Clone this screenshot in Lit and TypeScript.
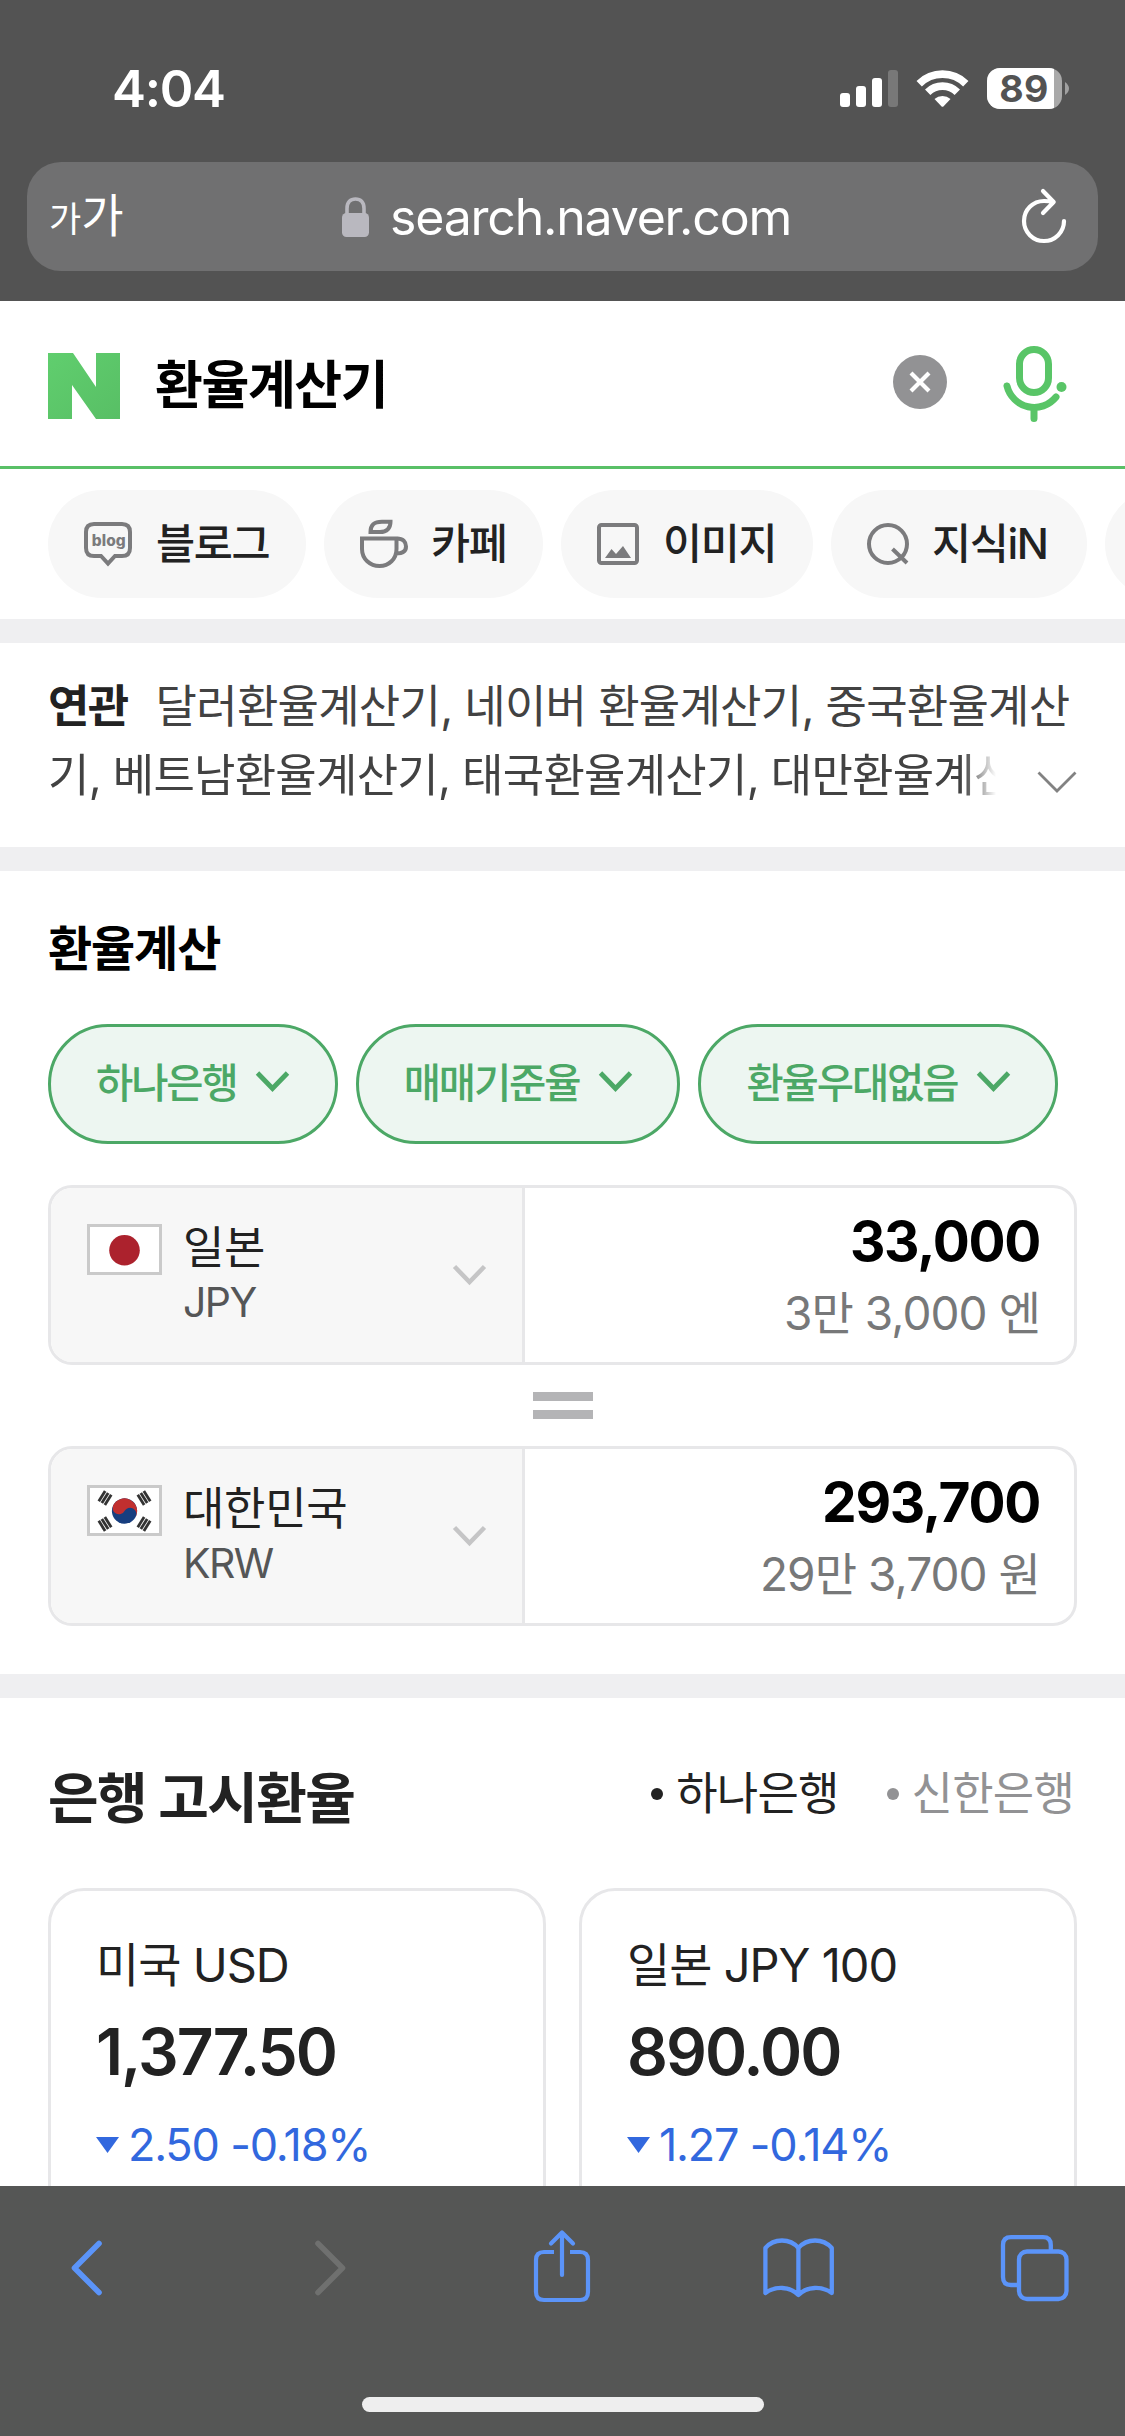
import { LitElement, html, css, svg } from "lit";
import { customElement, property } from "lit/decorators.js";

const FONT = css`Inter, "Noto Sans CJK KR", sans-serif`;

const shared = css`
  :host { box-sizing: border-box; }
  * { box-sizing: border-box; margin: 0; }
  svg { display: block; flex: none; overflow: visible; }
`;

/* ---------- Browser chrome: status bar and address bar ---------- */

@customElement("phone-header")
class PhoneHeader extends LitElement {
  static styles = [shared, css`
    :host { display: flex; flex-direction: column; height: 301px; flex: none; background: #535353; color: #fff; font-family: ${FONT}; }
    .status { display: flex; align-items: center; height: 162px; padding: 15px 56px 0 112px; }
    .time { flex: 1; font-size: 51px; line-height: 60px; font-weight: 600; letter-spacing: -1.3px; }
    .indicators { display: flex; align-items: center; gap: 19px; }
    .address { display: flex; align-items: center; height: 109px; margin: 0 27px; padding: 0 31px 0 22px; border-radius: 34px; background: #707071; }
    .size { display: flex; align-items: baseline; width: 293px; font-weight: 400; line-height: 60px; }
    .small { font-size: 35px; }
    .big { font-size: 46px; letter-spacing: -1px; }
    .host { flex: 1; display: flex; align-items: center; gap: 21px; }
    .url { font-size: 50px; line-height: 60px; letter-spacing: -1.2px; }
  `];
  render() {
    return html`
      <div class="status">
        <div class="time">4:04</div>
        <div class="indicators">
          <svg width="58" height="37" viewBox="0 0 58 37" fill="#fff">
            <rect x="0" y="23" width="10" height="14" rx="3"/><rect x="16" y="16" width="10" height="21" rx="3"/>
            <rect x="32" y="8" width="10" height="29" rx="3"/><rect x="48" y="0" width="10" height="37" rx="3" opacity=".22"/>
          </svg>
          <svg width="51" height="37" viewBox="0 0 51 37" fill="none" stroke="#fff" stroke-width="7.6">
            <path d="M2.2 13.7A33.2 33.2 0 0 1 48.8 13.7" /><path d="M10.7 22.2A21 21 0 0 1 40.3 22.2"/>
            <path d="M17.500 29A12 12 0 0 1 33.500 29L26.4 36.4Q25.5 37.2 24.6 36.4Z" fill="#fff" stroke="none"/>
          </svg>
          <svg width="82" height="41" viewBox="0 0 82 41">
            <clipPath id="cell"><rect width="75" height="41" rx="13"/></clipPath>
            <g clip-path="url(#cell)"><rect width="75" height="41" fill="#a9a9a9"/><rect width="67" height="41" fill="#fff"/></g>
            <path d="M78 14Q82 17 82 20.5T78 27Z" fill="#a0a0a0"/>
            <text x="36.8" y="34.3" text-anchor="middle" font-family="Inter" font-weight="700" font-size="37.5" textLength="49" fill="#535353">89</text>
          </svg>
        </div>
      </div>
      <div class="address">
        <div class="size"><span class="small">가</span><span class="big">가</span></div>
        <div class="host">
          <svg width="27" height="40" viewBox="0 0 27 40"><rect x="0" y="16" width="27" height="24" rx="4.5" fill="#b9b8bf"/><path d="M5 18V11.5C5 5 8.5 2 13.5 2S22 5 22 11.5V18" fill="none" stroke="#b9b8bf" stroke-width="3.6"/></svg>
          <span class="url">search.naver.com</span>
        </div>
        <svg width="46" height="55" viewBox="1021 187 46 55" fill="none" stroke="#fff" stroke-width="4.2" stroke-linecap="round" stroke-linejoin="round"><path d="M1064 219A20 20 0 1 1 1044 199Q1049 199 1053 200M1043 189L1053.7 200L1043 211"/></svg>
      </div>`;
  }
}

/* ---------- Search bar ---------- */

@customElement("search-bar")
class SearchBar extends LitElement {
  static styles = [shared, css`
    :host { display: flex; align-items: center; height: 168px; flex: none; padding: 4px 58px 0 48px; border-bottom: 3px solid #59c067; font-family: ${FONT}; }
    .query { flex: 1; padding-left: 35px; font-size: 52px; line-height: 62px; font-weight: 700; letter-spacing: -1.4px; color: #000; }
    .clear { margin-bottom: 7px; }
    .mic { margin: 0 0 3px 57px; }
  `];
  render() {
    return html`
      <svg width="72" height="66" viewBox="0 0 72 66">
        <defs><linearGradient id="n" x1="0" y1="0" x2="1" y2="1"><stop offset="0" stop-color="#60ce6e"/><stop offset="1" stop-color="#58bf65"/></linearGradient></defs>
        <polygon points="0,0 25,0 48,34 48,0 72,0 72,66 48,66 24,32 24,66 0,66" fill="url(#n)"/>
      </svg>
      <div class="query">환율계산기</div>
      <svg class="clear" width="54" height="54" viewBox="0 0 54 54"><circle cx="27" cy="27" r="27" fill="#929294"/><path d="M18 18L36 36M36 18L18 36" stroke="#fff" stroke-width="4.2"/></svg>
      <svg class="mic" width="63" height="76" viewBox="1004 346 63 76" fill="none" stroke="#59c567" stroke-width="7" stroke-linecap="round">
        <rect x="1019.500" y="349.500" width="29" height="43" rx="14.500"/>
        <path d="M1007 386A28 28 0 0 0 1056 397M1034 409V418.500"/><circle cx="1061.500" cy="387" r="5" fill="#59c567" stroke="none"/>
      </svg>`;
  }
}

/* ---------- Horizontal category chips ---------- */

const tabIcons = {
  blog: svg`<svg width="48" height="54" viewBox="84 518 48 54" fill="none" stroke="#7b7b7d" stroke-width="4"><path d="M94 525H122Q130 525 130 533V549Q130 557 122 557H115L108 564.500L101 557H94Q86 557 86 549V533Q86 525 94 525Z"/><text x="91.800" y="546.500" font-family="Inter" font-size="15.500" font-weight="800" textLength="32.500" fill="#7b7b7d" stroke="none">blog</text></svg>`,
  cafe: svg`<svg width="48" height="54" viewBox="360 517 48 54" fill="none" stroke="#7b7b7d" stroke-width="4"><path d="M362 538.500H396.500V549C396.500 559 389 566 379.500 566S362 559 362 549ZM397 538.500C403 538.500 406 542 406 546.500S403 553.500 396 553.500"/><path d="M370.500 532C370.500 525 374 521.800 382 521.800H390.500C390.500 528 387 532 380 532Z"/></svg>`,
  image: svg`<svg width="42" height="42" viewBox="0 0 42 42"><rect x="2" y="2" width="38" height="38" rx="2.500" fill="none" stroke="#7b7b7d" stroke-width="4"/><path d="M8 35L14.500 26L19 31L26 23L34 35Z" fill="#7b7b7d"/></svg>`,
  kin: svg`<svg width="42" height="42" viewBox="0 0 42 42" fill="none" stroke="#7b7b7d" stroke-width="4"><circle cx="21" cy="21" r="19"/><path d="M25.500 26L40 40"/></svg>`,
};

@customElement("category-tabs")
class CategoryTabs extends LitElement {
  static styles = [shared, css`
    :host { display: flex; gap: 18px; height: 150px; flex: none; padding: 21px 0 21px 48px; overflow: hidden; font-family: ${FONT}; }
    .pill { display: flex; align-items: center; gap: 24px; flex: none; height: 108px; padding-left: 36px; border-radius: 54px; background: #f7f7f7; font-size: 42.5px; line-height: 54px; font-weight: 500; letter-spacing: -1.4px; color: #222; white-space: nowrap; }
    .blog { width: 258px; }
    .cafe { width: 219px; gap: 23px; }
    .image { width: 252px; }
    .kin { width: 256px; gap: 23px; }
    .next { width: 200px; }
  `];
  render() {
    return html`
      <div class="pill blog">${tabIcons.blog}<span>블로그</span></div>
      <div class="pill cafe">${tabIcons.cafe}<span>카페</span></div>
      <div class="pill image">${tabIcons.image}<span>이미지</span></div>
      <div class="pill kin">${tabIcons.kin}<span>지식iN</span></div>
      <div class="pill next"></div>`;
  }
}

/* ---------- Related searches ---------- */

@customElement("related-searches")
class RelatedSearches extends LitElement {
  static styles = [shared, css`
    :host { display: flex; flex-direction: column; height: 204px; flex: none; padding: 29px 48px 0 48px; font-family: ${FONT}; font-size: 45px; line-height: 69px; letter-spacing: -0.75px; color: #424242; white-space: nowrap; }
    .first { display: flex; gap: 28px; }
    .label { font-weight: 700; letter-spacing: -1.6px; color: #222; }
    .second { display: flex; align-items: center; justify-content: space-between; }
    .rest { -webkit-mask-image: linear-gradient(90deg, #000 915px, transparent 948px); mask-image: linear-gradient(90deg, #000 915px, transparent 948px); }
    .more { margin-top: 12px; }
  `];
  render() {
    return html`
      <div class="first"><span class="label">연관</span><span>달러환율계산기, 네이버 환율계산기, 중국환율계산</span></div>
      <div class="second"><span class="rest">기, 베트남환율계산기, 태국환율계산기, 대만환율계산</span>
        <svg class="more" width="40" height="22" viewBox="0 0 40 22" fill="none" stroke="#828282" stroke-width="2.8"><path d="M1.500 1.500L20 20L38.500 1.500"/></svg></div>`;
  }
}

/* ---------- Currency calculator ---------- */

@customElement("currency-row")
class CurrencyRow extends LitElement {
  @property() flag = "";
  @property() country = "";
  @property() code = "";
  @property() amount = "";
  @property() spoken = "";
  static styles = [shared, css`
    :host { display: flex; height: 180px; flex: none; border: 3px solid #e7e7e9; border-radius: 24px; overflow: hidden; font-family: ${FONT}; }
    .unit { display: flex; width: 474px; padding: 36px 36px 0; background: #f7f7f7; border-right: 3px solid #e7e7e9; }
    .flag { width: 75px; height: 51px; flex: none; border: 3px solid #cacaca; background: #fff; }
    .names { flex: 1; padding-left: 21px; }
    .country { margin-top: -6px; font-size: 45px; line-height: 60px; letter-spacing: -0.3px; color: #222; white-space: nowrap; }
    .code { margin-top: -3px; font-size: 41px; line-height: 54px; letter-spacing: -1.6px; color: #555657; }
    .arrow { margin-top: 41px; }
    .value { flex: 1; padding: 23px 34px 0 0; text-align: right; }
    .amount { font-size: 55px; line-height: 60px; font-weight: 700; letter-spacing: -1.3px; color: #000; }
    .spoken { margin-top: 12px; font-size: 46px; line-height: 60px; letter-spacing: -0.95px; color: #777879; }
  `];
  private flagArt() {
    if (this.flag === "jp") return html`<svg width="69" height="45" viewBox="0 0 69 45"><circle cx="34.500" cy="23.300" r="15.300" fill="#ac222d"/></svg>`;
    const bars = (x: number, y: number, a: number) => svg`<g transform="translate(${x} ${y}) rotate(${a})" fill="#333"><rect x="-6" y="-5" width="12" height="2.800"/><rect x="-6" y="-1.400" width="12" height="2.800"/><rect x="-6" y="2.200" width="12" height="2.800"/></g>`;
    return html`<svg width="69" height="45" viewBox="0 0 69 45">
      <g transform="rotate(28 34.500 23)"><circle cx="34.500" cy="23" r="12.600" fill="#173e7f"/>
      <path d="M21.900 23A12.600 12.600 0 0 1 47.100 23A6.300 6.300 0 0 0 34.500 23A6.300 6.300 0 0 1 21.900 23Z" fill="#c12f2f"/></g>
      ${bars(15, 10, -58)}${bars(54, 10, 58)}${bars(15, 36, 58)}${bars(54, 36, -58)}</svg>`;
  }
  render() {
    return html`
      <div class="unit">
        <div class="flag">${this.flagArt()}</div>
        <div class="names"><div class="country">${this.country}</div><div class="code">${this.code}</div></div>
        <svg class="arrow" width="33" height="20" viewBox="0 0 33 20" fill="none" stroke="#c5c5c6" stroke-width="4.500"><path d="M1.500 1.500L16.500 17L31.500 1.500"/></svg>
      </div>
      <div class="value"><div class="amount">${this.amount}</div><div class="spoken">${this.spoken}</div></div>`;
  }
}

@customElement("rate-calculator")
class RateCalculator extends LitElement {
  static styles = [shared, css`
    :host { display: flex; flex-direction: column; height: 803px; flex: none; padding: 47px 48px 0; font-family: ${FONT}; }
    .title { font-size: 48px; line-height: 62px; font-weight: 700; letter-spacing: -1.1px; color: #000; }
    .chips { display: flex; gap: 18px; margin: 44px 0 41px; }
    .chip { display: flex; align-items: center; gap: 19.5px; height: 120px; padding: 0 45.5px 0 45px; border: 3px solid #4ca866; border-radius: 60px; background: #edf6f1; color: #4ca866; font-size: 40.5px; line-height: 54px; font-weight: 500; letter-spacing: -2.1px; white-space: nowrap; }
    .equals { display: flex; flex-direction: column; gap: 9px; width: 60px; margin: 27px auto; }
    .bar { height: 9px; background: #b4b4b6; }
  `];
  render() {
    return html`
      <div class="title">환율계산</div>
      <div class="chips">${["하나은행", "매매기준율", "환율우대없음"].map((t) => html`<div class="chip"><span>${t}</span>
        <svg width="33" height="20" viewBox="0 0 33 20" fill="none" stroke="#4ca866" stroke-width="4.800"><path d="M1.500 -1L16.500 14.500L31.500 -1"/></svg></div>`)}</div>
      <currency-row flag="jp" country="일본" code="JPY" amount="33,000" spoken="3만 3,000 엔"></currency-row>
      <div class="equals"><div class="bar"></div><div class="bar"></div></div>
      <currency-row flag="kr" country="대한민국" code="KRW" amount="293,700" spoken="29만 3,700 원"></currency-row>`;
  }
}

/* ---------- Posted bank rates ---------- */

@customElement("bank-rates")
class BankRates extends LitElement {
  static styles = [shared, css`
    :host { display: flex; flex-direction: column; height: 488px; flex: none; padding: 64px 48px 0; overflow: hidden; font-family: ${FONT}; color: #222; }
    .head { display: flex; align-items: center; flex: none; height: 72px; padding-right: 3px; }
    .title { flex: 1; font-size: 55px; line-height: 72px; font-weight: 600; letter-spacing: -1.6px; }
    .bank { display: flex; align-items: center; gap: 13px; margin: -8px 0 0 48px; font-size: 45px; line-height: 60px; letter-spacing: -0.8px; }
    .dot { width: 12px; height: 12px; border-radius: 50%; background: currentColor; }
    .off { color: #929294; }
    .cards { display: grid; grid-template-columns: 1fr 1fr; gap: 33px; margin-top: 54px; }
    .card { height: 420px; padding: 44px 45px; border: 3px solid #e7e7e9; border-radius: 36px; white-space: nowrap; }
    .name { font-size: 47px; line-height: 60px; letter-spacing: -1px; }
    .rate { margin-top: 18px; font-size: 64px; line-height: 78px; font-weight: 600; letter-spacing: -2px; }
    .change { display: flex; align-items: center; gap: 9px; margin-top: 24px; font-size: 45px; line-height: 60px; letter-spacing: -1.2px; color: #3268de; }
  `];
  render() {
    const rates = [
      { name: "미국 USD", rate: "1,377.50", change: "2.50 -0.18%" },
      { name: "일본 JPY 100", rate: "890.00", change: "1.27 -0.14%" },
    ];
    return html`
      <div class="head"><div class="title">은행 고시환율</div>
        <div class="bank"><span class="dot"></span>하나은행</div><div class="bank off"><span class="dot"></span>신한은행</div></div>
      <div class="cards">${rates.map((r) => html`<div class="card">
        <div class="name">${r.name}</div><div class="rate">${r.rate}</div>
        <div class="change"><svg width="23" height="16" viewBox="0 0 23 16"><path d="M0 0H23L11.500 16Z" fill="#3268de"/></svg>${r.change}</div></div>`)}</div>`;
  }
}

/* ---------- Browser toolbar ---------- */

@customElement("phone-toolbar")
class PhoneToolbar extends LitElement {
  static styles = [shared, css`
    :host { display: flex; flex-direction: column; align-items: center; justify-content: space-between; height: 250px; flex: none; padding: 44px 0 24px; background: #555655; }
    .icons { display: flex; align-items: center; width: 100%; height: 76px; padding-left: 70px; }
    .forward { margin-left: 211px; }
    .share { margin-left: 187px; }
    .book { margin-left: 172px; }
    .tabs { margin-left: 167px; }
    .home { width: 402px; height: 15px; border-radius: 8px; background: #eee; }
  `];
  render() {
    return html`
      <div class="icons">
        <svg width="33" height="56" viewBox="0 0 33 56" fill="none" stroke="#5b94f9" stroke-width="5.600" stroke-linecap="round" stroke-linejoin="round"><path d="M29 3.500L4.500 28L29 52.500"/></svg>
        <svg class="forward" width="33" height="56" viewBox="0 0 33 56" fill="none" stroke="#6f706f" stroke-width="5.600" stroke-linecap="round" stroke-linejoin="round"><path d="M4 3.500L28.500 28L4 52.500"/></svg>
        <svg class="share" width="57" height="76" viewBox="534 2230 57 76" fill="none" stroke="#5b94f9" stroke-width="4.200" stroke-linecap="round" stroke-linejoin="round"><path stroke-linecap="butt" d="M554 2252H544Q536 2252 536 2260V2292Q536 2300 544 2300H580Q588 2300 588 2292V2260Q588 2252 580 2252H570"/><path d="M562 2275V2232.500M551 2243.500L562 2232.500L573 2243.500"/></svg>
        <svg class="book" width="71" height="76" viewBox="763 2230 71 76" fill="none" stroke="#5b94f9" stroke-width="4.300" stroke-linecap="round" stroke-linejoin="round"><path d="M765.400 2293V2248C774 2238 790 2238 798.400 2248C807 2238 823 2238 831.800 2248V2293C822 2286 807 2286 798.400 2295C790 2286 775 2286 765.400 2293ZM798.400 2248V2294"/></svg>
        <svg class="tabs" width="68" height="76" viewBox="1001 2230 68 76" fill="none" stroke="#5b94f9" stroke-width="4.300"><rect x="1019" y="2251.500" width="47.500" height="47.500" rx="8"/><path d="M1018 2285H1011Q1003 2285 1003 2277V2245Q1003 2237.200 1011 2237.200H1043Q1050.800 2237.200 1050.800 2245V2250"/></svg>
      </div>
      <div class="home"></div>`;
  }
}

@customElement("app-root")
class AppRoot extends LitElement {
  static styles = css`
    :host { display: flex; flex-direction: column; width: 1125px; height: 2436px; overflow: hidden; background: #fff; }
    .band { height: 24px; flex: none; background: #efeff1; }
  `;
  render() {
    return html`
      <phone-header></phone-header>
      <search-bar></search-bar>
      <category-tabs></category-tabs>
      <div class="band"></div>
      <related-searches></related-searches>
      <div class="band"></div>
      <rate-calculator></rate-calculator>
      <div class="band"></div>
      <bank-rates></bank-rates>
      <phone-toolbar></phone-toolbar>`;
  }
}
